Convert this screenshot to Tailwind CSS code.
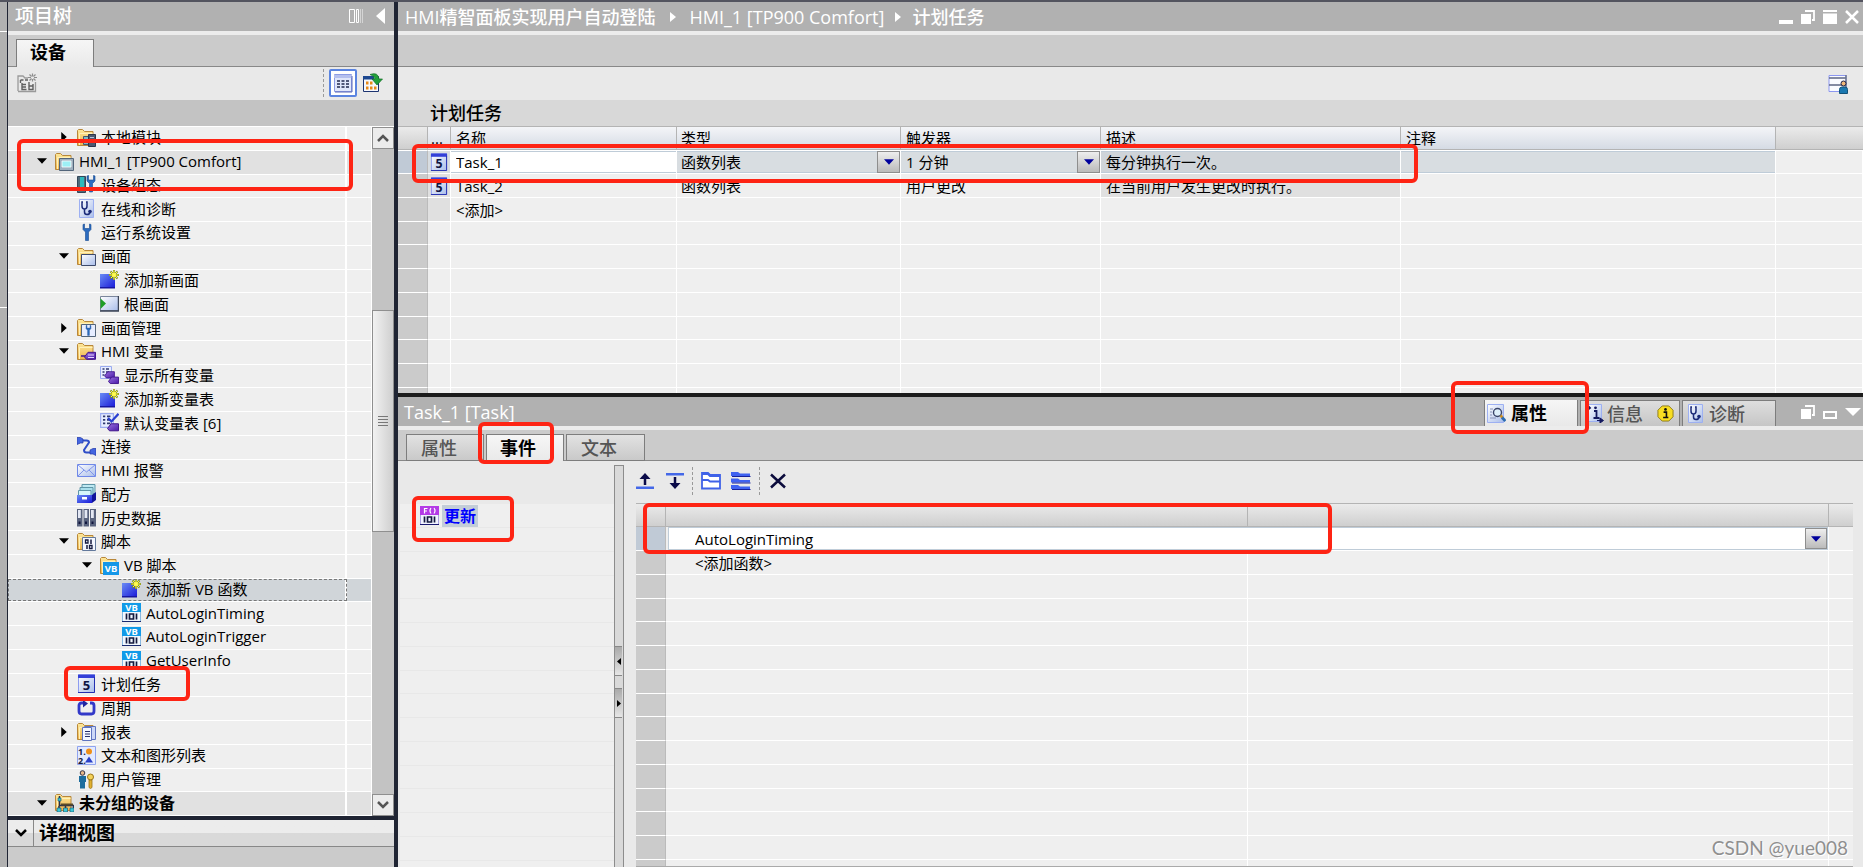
<!DOCTYPE html>
<html lang="zh-CN">
<head>
<meta charset="utf-8">
<title>计划任务</title>
<script src="https://cdn.jsdelivr.net/npm/@tailwindcss/browser@4"></script>
</head>
<body class="relative flex h-screen min-h-[600px] overflow-hidden border-t-2 border-[#53545f] bg-[#cbcbcb] font-['Open_Sans','Noto_Sans_CJK_SC',sans-serif] text-[15px] leading-5 text-black">

<!-- Gradients stay rendered so that the icons can paint with them -->
<svg class="absolute size-0" aria-hidden="true">
  <defs>
    <linearGradient id="gFolder" x1="0" y1="0" x2="0" y2="1"><stop offset="0" stop-color="#fde89a"/><stop offset="1" stop-color="#eeb44c"/></linearGradient>
    <linearGradient id="gBlue" x1="0" y1="0" x2="1" y2="1"><stop offset="0" stop-color="#6a8cf5"/><stop offset="1" stop-color="#1a1ad8"/></linearGradient>
    <linearGradient id="gPane" x1="0" y1="0" x2="1" y2="1"><stop offset="0" stop-color="#ffffff"/><stop offset="1" stop-color="#a9bdea"/></linearGradient>
    <linearGradient id="gPurple" x1="0" y1="0" x2="1" y2="1"><stop offset="0" stop-color="#9a70e0"/><stop offset="1" stop-color="#4a1ba8"/></linearGradient>
  </defs>
</svg>

<!-- Shared icon shapes -->
<svg class="hidden" aria-hidden="true">
  <symbol id="folder" viewBox="0 0 19 19"><path d="M.5 17.500V2.500l1-1h4l2 2h8.500v14z" fill="url(#gFolder)" stroke="#b8873a"/><path d="M2.500 17V5.500h13" fill="none" stroke="#fff0b8"/></symbol>
  <symbol id="wr" viewBox="0 0 10 18"><path d="M1 1v5l2.500 2.500V17h3V8.500L9 6V1L7.500.5V5h-5V.5z" fill="#2c6cc0" stroke="#154a90" stroke-width=".6"/></symbol>
  <symbol id="local" viewBox="0 0 19 19"><use href="#folder"/><path d="M6.500 8.500h5v8h-5z" fill="#7eb8c8" stroke="#46566e"/><path d="M11.500 6.500h7v12h-7z" fill="#4b5870" stroke="#2b354a"/><path d="M13 9h4v1h-4z" fill="#b8c4da"/></symbol>
  <symbol id="hmi" viewBox="0 0 19 19"><use href="#folder"/><path d="M4.500 6.500h14v12h-14z" fill="#9fb0bf" stroke="#53657a"/><path d="M7 9h9v6H7z" fill="#9df0f5" stroke="#fff" stroke-width=".8"/></symbol>
  <symbol id="devcfg" viewBox="0 0 19 19"><path d="M.5 1.500h8v16h-8z" fill="#4d6a7a" stroke="#33475a"/><path d="M3 2h4v14H3z" fill="#2fb9bd"/><use href="#wr" x="9" y="0" width="10" height="18"/></symbol>
  <symbol id="diag" viewBox="0 0 19 19"><path d="M2.500.5h14v18h-14z" fill="url(#gPane)" stroke="#9db0f2"/><path d="M6 3H5v4q0 3 2.500 3T10 7V3H9M7.500 10v3q0 2.500 2.500 2.500t3-2" fill="none" stroke="#1b2a78" stroke-width="1.500"/><circle cx="13" cy="12.500" r="1.800" fill="#1b2a78"/></symbol>
  <symbol id="wrench" viewBox="0 0 19 19"><use href="#wr" x="5" y="0" width="10" height="19"/></symbol>
  <symbol id="screens" viewBox="0 0 19 19"><use href="#folder"/><path d="M4.500 7.500h14v11h-14z" fill="url(#gPane)" stroke="#3d4a6c"/></symbol>
  <symbol id="new" viewBox="0 0 19 19"><path d="M0 4h15v14H0z" fill="url(#gBlue)"/><path d="M0 17h15v1.500H0z" fill="#1717a0"/><path d="M14 0v10M9 5h10M10.500 1.500l7 7M17.500 1.500l-7 7" stroke="#7a8a1c" stroke-width="1.800"/><path d="M14 .5v9M9.500 5h9M11 2l6 6M17 2l-6 6" stroke="#fff93c"/><circle cx="14" cy="5" r="2" fill="#fffb55"/></symbol>
  <symbol id="root" viewBox="0 0 19 19"><path d="M.5 2.500h18v14H.5z" fill="url(#gPane)" stroke="#7b869c"/><path d="M18.500 2v15H0" fill="none" stroke="#3c4558" stroke-width="1.500"/><path d="M.5 4.500L6 9.500l-5.500 5.500z" fill="#1f9e28"/></symbol>
  <symbol id="scrmgmt" viewBox="0 0 19 19"><use href="#folder"/><path d="M4.500 6.500h14v12h-14z" fill="#e6edff" stroke="#53657a"/><use href="#wr" x="7.500" y="7" width="8" height="11"/></symbol>
  <symbol id="tag" viewBox="0 0 12 9"><path d="M.5 5.500L4 .8h7.500v7H2.500z" fill="url(#gPurple)" stroke="#40158c"/></symbol>
  <symbol id="tags" viewBox="0 0 19 19"><use href="#folder"/><path d="M4 14h5" stroke="#40158c" stroke-width="1.500"/><use href="#tag" x="7" y="9" width="12" height="10"/><path d="M11 13h6M11 15.500h6" stroke="#e6d6ff"/></symbol>
  <symbol id="lst" viewBox="0 0 12 13"><path d="M.5.5h11v12H.5z" fill="#e8eeff" stroke="#9aabf0"/><path d="M2.500 3h2M2.500 6h2M2.500 9h2M6 3h3M6 6h3M6 9h3" stroke="#303a70" stroke-width="1.500"/></symbol>
  <symbol id="showtags" viewBox="0 0 19 19"><use href="#lst" width="12" height="13"/><use href="#tag" x="4" y="5" width="11" height="8"/><use href="#tag" x="8" y="10" width="11" height="9"/></symbol>
  <symbol id="deftags" viewBox="0 0 19 19"><use href="#lst" width="14" height="15"/><path d="M8 5l3.500 3.500L18.500.8" fill="none" stroke="#2a3fd0" stroke-width="2.200"/><use href="#tag" x="7" y="10" width="12" height="9"/></symbol>
  <symbol id="conn" viewBox="0 0 19 19"><path d="M5 3.500h4.500q2.500 0 2.500 2L7 13q0 2.500 2.500 2.500H14" fill="none" stroke="#2f4ec8" stroke-width="2"/><path d="M0 .5h3.500L6 2v4H3.500L0 7.500zM19 11.500h-3L13 13v4h3l3 1.500z" fill="#4466e0" stroke="#2238a8" stroke-width=".7"/></symbol>
  <symbol id="mail" viewBox="0 0 19 19"><path d="M.5 3.500h18v12H.5z" fill="url(#gPane)" stroke="#6f88e8"/><path d="M1 4l8.500 7L18 4M1 15l6-6M18 15l-6-6" fill="none" stroke="#8095ea"/></symbol>
  <symbol id="recipe" viewBox="0 0 19 19"><path d="M5 .5h13v9H5z" fill="#bfe9f2" stroke="#5f96a8"/><path d="M3 3.500h13v8H3z" fill="#a9dfec" stroke="#5f96a8"/><path d="M1.500 6.500h12.500v6H1.500z" fill="#d6f5fb" stroke="#5f96a8"/><path d="M15 11l4-3v8l-4 3z" fill="#10149a"/><path d="M0 11h15v8H0z" fill="url(#gBlue)"/><path d="M5 13h5v2.500H5z" fill="#fff"/></symbol>
  <symbol id="hist" viewBox="0 0 19 19"><path d="M0 1h5.500v17.500H0zM6.500 1H12v17.500H6.500zM13 1h6v17.500h-6z" fill="#59637e"/><path d="M1 2h2.800v8H1zM7.500 2h2.800v8H7.500zM14 2h2.800v8H14z" fill="#e4e8f4"/><path d="M1.500 13.500h2V16h-2zM8 13.500h2V16H8zM14.500 13.500h2V16h-2z" fill="#10153c"/></symbol>
  <symbol id="script" viewBox="0 0 19 19"><use href="#folder"/><path d="M5.500 5.500h13v13h-13z" fill="#f4f7ff" stroke="#63799c"/><path d="M8.500 8h2.500v3H8.500zM12.500 13.500H15v3h-2.500z" fill="none" stroke="#14193e" stroke-width="1.300"/><path d="M14 7.500V12M10 13v4" stroke="#14193e" stroke-width="1.500"/></symbol>
  <symbol id="vbfolder" viewBox="0 0 19 19"><use href="#folder"/><path d="M3 6h16v13H3z" fill="#1497e8"/><text x="11" y="16" text-anchor="middle" font-family="Noto Sans" font-weight="700" font-size="9.500" fill="#fff">VB</text></symbol>
  <symbol id="vb" viewBox="0 0 19 19"><path d="M.5.5h18v18H.5z" fill="#f2f8ff" stroke="#88b8e0"/><path d="M0 0h19v9H0z" fill="#119ae8"/><path d="M0 18h19v1H0z" fill="#1a2a70"/><text x="9.500" y="8" text-anchor="middle" font-family="Noto Sans" font-weight="700" font-size="9.500" fill="#fff">VB</text><path d="M4.500 10.500v6M14.500 10.500v6M7.500 11h4v5h-4z" fill="none" stroke="#14193e" stroke-width="1.700"/></symbol>
  <symbol id="func" viewBox="0 0 19 19"><path d="M.5.5h18v18H.5z" fill="#f2f4ff" stroke="#a9a0e0"/><path d="M0 0h19v9H0z" fill="#b43be6"/><path d="M0 18h19v1H0z" fill="#1a1a70"/><path d="M4.500 7.500v-5h3M4.500 5H7M11 2q-2 2.700 0 5.500M14 2q2 2.700 0 5.500" fill="none" stroke="#fff" stroke-width="1.200"/><path d="M4.500 10.500v6M14.500 10.500v6M7.500 11h4v5h-4z" fill="none" stroke="#14193e" stroke-width="1.700"/></symbol>
  <symbol id="task" viewBox="0 0 19 19"><path d="M1.500 1h16v17.500h-16z" fill="url(#gPane)" stroke="#8d9cf0"/><path d="M1 .5h17V4H1z" fill="#3340d8"/><path d="M17.500 3v15.500H1" fill="none" stroke="#2430b0"/><text x="9.500" y="15.500" text-anchor="middle" font-family="Noto Sans" font-weight="700" font-size="13" fill="#111644">5</text></symbol>
  <symbol id="cycle" viewBox="0 0 19 19"><path d="M6 5H4.500Q2 5 2 7.500V13q0 3 2.500 3h10q2.500 0 2.500-3V7.500Q17 5 14.500 5H13" fill="none" stroke="#3238c8" stroke-width="2.800"/><path d="M6 9.500V2l5 3.500z" fill="#2025a0"/></symbol>
  <symbol id="report" viewBox="0 0 19 19"><use href="#folder"/><path d="M7.500 4.500h11v13h-11z" fill="#cdd8f8" stroke="#5f74c0"/><path d="M5.500 5.500h9v13h-9z" fill="#f4f7ff" stroke="#5f74c0"/><path d="M8 9.500h5M8 12h5M8 14.500h5" stroke="#28306a" stroke-width="1.200"/></symbol>
  <symbol id="textlist" viewBox="0 0 19 19"><path d="M.5.5h18v18H.5z" fill="#e3eaff" stroke="#8fa3ee"/><text x="1" y="8.500" font-family="Noto Sans" font-weight="700" font-size="9" fill="#14193e">1.</text><text x="1" y="17.500" font-family="Noto Sans" font-weight="700" font-size="9" fill="#14193e">2.</text><circle cx="12" cy="5.500" r="3" fill="#f09018"/><path d="M12 10.500l4 6H8z" fill="#2a40c8"/></symbol>
  <symbol id="user" viewBox="0 0 19 19"><circle cx="5.500" cy="3" r="2.300" fill="#e8b888" stroke="#20243c" stroke-width=".9"/><path d="M2 6h7v6H8v6.500H3V12H2z" fill="#1d6d9e"/><circle cx="13.500" cy="7" r="3" fill="#f4d25a" stroke="#9a7418"/><path d="M12 10h3v7.500l-1.500 1-1.500-1z" fill="#e0b030" stroke="#9a7418" stroke-width=".8"/></symbol>
  <symbol id="ungrouped" viewBox="0 0 19 19"><use href="#folder"/><path d="M4.500 3v10M4.500 12.500h14v3M10.500 12v4M4 13v3" fill="none" stroke="#243050" stroke-width="1.500"/><path d="M6 10.500h12v2H6z" fill="#5b4a28"/><path d="M3 5h3v3H3zM2 15h4v4H2zM8.500 15h4v4h-4zM15 15h4v4h-4z" fill="#38c8d8" stroke="#245a70" stroke-width=".7"/></symbol>
  <symbol id="doc-off" viewBox="0 0 20 20"><path d="M1 18V3h5l2 2h3M1 18.500h17.500V9" fill="none" stroke="#9a9a9a" stroke-width="1.300"/><path d="M3.500 7h3M8 7h3M3.500 7v3M5 10v6.500h4.500M5 11.500h4M5 14h4M12 9v7.500h4V11M12 13h4" fill="none" stroke="#5f5f5f" stroke-width="1.400"/><path d="M15.500.5v3M15.500 6v2.500M11 4.500h3M17 4.500h3M12.500 1.500l2 2M18.500 1.500l-2 2M12.500 7.500l2-2M18.500 7.500l-2-2" stroke="#8d8d8d" stroke-width="1.200"/></symbol>
  <symbol id="listview" viewBox="0 0 20 20"><path d="M1.500 1.500h17v17h-17z" fill="#e0e6fa" stroke="#8d9ce4"/><path d="M1 2h18v3H1z" fill="#b5c0ee"/><path d="M19 3v16H2" fill="none" stroke="#5a68b8"/><path d="M4 8h3M8.500 8h3M13 8h3M4 11h3M8.500 11h3M13 11h3M4 14h3M8.500 14h3M13 14h3" stroke="#20284e" stroke-width="1.300"/></symbol>
  <symbol id="netview" viewBox="0 0 20 20"><path d="M.5 3.500h15v15H.5z" fill="#f6f7fb" stroke="#1d3470"/><path d="M0 3h11v3.500H0z" fill="#1d4890"/><path d="M3 8.500h2.500v3H3zM7 8.500h2.500v3H7zM3 13.500h2.500v3H3zM7 13.500h2.500v3H7zM11 13.500h2.500v3H11z" fill="#e88a18"/><path d="M7 1.500q8-3 9 4.500h3.500L14 12 9 6h3q-.5-3-5-4.500z" fill="#23a03a" stroke="#127026" stroke-width=".7"/></symbol>
  <symbol id="layout-user" viewBox="0 0 20 20"><path d="M1 1.500h17v16H1z" fill="#fafbff" stroke="#8c97f0"/><path d="M1 4h17M1 11h17" stroke="#5d6784" stroke-width="1.500"/><path d="M18 1v17" stroke="#6d7690" stroke-width="1.500"/><circle cx="15.500" cy="9.500" r="2.500" fill="#f0b878" stroke="#1e234a"/><path d="M11.500 19.500v-4q0-2.500 2.500-2.500h3q2.500 0 2.500 2.500v4z" fill="#1a78b0" stroke="#135278"/></symbol>
  <symbol id="props" viewBox="0 0 19 19"><path d="M.5.5h16v18H.5z" fill="url(#gPane)" stroke="#9db0f2"/><path d="M3 5h3M3 8h2M3 11h2M3 14h6" stroke="#8793b8"/><circle cx="10.500" cy="8.500" r="4" fill="#dff0fa" stroke="#3a4468" stroke-width="1.400"/><path d="M13.500 11.500l2 2" stroke="#d09020" stroke-width="2.500"/><path d="M15 13.500l3.500 3.500" stroke="#2c6cb0" stroke-width="3"/></symbol>
  <symbol id="infopage" viewBox="0 0 19 19"><path d="M3.500.5h13v17h-13z" fill="url(#gPane)" stroke="#9db0f2"/><path d="M0 3.500h4M2.500 1.500L5 4 2.500 6M9 7h2.500v7M8.500 14h6" fill="none" stroke="#14195e" stroke-width="1.800"/><circle cx="10.500" cy="3.800" r="1.400" fill="#14195e"/><path d="M12 16.500h4.500M15 14l3.500 2.500L15 19z" fill="#14195e" stroke="#14195e"/></symbol>
  <symbol id="infobadge" viewBox="0 0 18 18"><path d="M5.500 1h7L17 5.500v7L12.500 17h-7L1 12.500v-7z" fill="#f8de22" stroke="#8c7a18"/><path d="M7 7.500h3V13M6.500 13.200h5.500" fill="none" stroke="#111" stroke-width="1.700"/><circle cx="9" cy="4.700" r="1.400" fill="#111"/></symbol>
  <symbol id="restore" viewBox="0 0 14 14"><path d="M0 4h10v10H0z" fill="#fff"/><path d="M4 1h9v9h-2" fill="none" stroke="#fff" stroke-width="1.800"/></symbol>
</svg>

<!-- Edge of the collapsed portal bar -->
<div class="flex w-2 shrink-0 flex-col border-r border-[#1f2433] bg-[#b1b1b1]"><div class="h-[30px] border-b border-white"></div><div class="h-[276px] border-b border-white"></div></div>

<!-- Project tree -->
<aside class="flex w-[386px] shrink-0 flex-col">
  <header class="flex h-[29px] shrink-0 items-center bg-[#b1b1b1] pr-[9px] pb-px pl-[7px]">
    <h2 class="text-[19px] font-medium text-white">项目树</h2>
    <button class="ml-auto" aria-label="列"><svg class="h-4 w-4" viewBox="0 0 16 16"><path d="M1.500 1.500h5v13h-5zM8.500 1.500h2v13h-2z" fill="none" stroke="#fff"/><path d="M12.500 1v14M14.500 1v14" stroke="#d4d4d4"/></svg></button>
    <button class="ml-3" aria-label="折叠"><svg class="h-4 w-[9px]" viewBox="0 0 9 16"><path d="M9 0v16L0 8z" fill="#fff"/></svg></button>
  </header>
  <div class="flex h-9 shrink-0 items-end border-t-4 border-[#ececec] bg-[#cbcbcb] shadow-[inset_0_-1px_0_#888]">
    <button class="ml-2 h-7 w-[78px] border-x border-t border-[#7d7d7d] bg-linear-to-b from-[#f6f6f6] to-[#e9e9e9] pb-1 pl-[13px] text-left text-[18px] font-bold">设备</button>
  </div>
  <div class="flex h-[33px] shrink-0 items-center bg-[#e9e9e9] pr-[11px] pb-[2px] pl-[9px]">
    <button aria-label="新建"><svg class="size-5"><use href="#doc-off"/></svg></button>
    <div class="ml-auto h-7 border-l border-dashed border-[#999]"></div>
    <button class="ml-[5px] flex size-7 items-center justify-center rounded-xs border-2 border-[#5b84e0] bg-white" aria-label="列表视图"><svg class="size-5"><use href="#listview"/></svg></button>
    <button class="ml-[6px]" aria-label="网络视图"><svg class="size-5"><use href="#netview"/></svg></button>
  </div>
  <div class="h-[27px] shrink-0 border-b border-white bg-[#c3c3c3]"></div>
  <div class="flex min-h-0 flex-1">
    <ul id="tree" role="tree" class="flex min-w-0 flex-1 flex-col bg-[#efefef]"></ul>
    <div class="flex w-[23px] flex-col border-l border-white bg-[#c3c3c3]">
      <button class="flex h-[22px] w-full shrink-0 items-center justify-center border border-[#8f8f8f] bg-[#ececec]" aria-label="向上滚动"><svg class="h-2 w-3" viewBox="0 0 12 8"><path d="M1 7l5-5 5 5" fill="none" stroke="#555" stroke-width="2.500"/></svg></button>
      <div class="flex-[161]"></div>
      <div class="flex flex-[221] items-center justify-center border border-[#8f8f8f] bg-linear-to-r from-[#f2f2f2] to-[#cfcfcf]"><svg class="h-3 w-[10px]" viewBox="0 0 10 12"><path d="M0 1.500h10M0 4.500h10M0 7.500h10M0 10.500h10" stroke="#777"/></svg></div>
      <div class="flex-[263]"></div>
      <button class="flex h-[22px] w-full shrink-0 items-center justify-center border border-[#8f8f8f] bg-[#ececec]" aria-label="向下滚动"><svg class="h-2 w-3" viewBox="0 0 12 8"><path d="M1 1l5 5 5-5" fill="none" stroke="#555" stroke-width="2.500"/></svg></button>
    </div>
  </div>
  <button class="flex h-[31px] shrink-0 items-center border-t-4 border-b border-t-[#1f2433] border-b-[#888] bg-linear-to-b from-[#ececec] from-50% to-[#d9d9d9] to-50%">
    <span class="flex h-full w-[26px] items-center justify-center border-r border-[#888]"><svg class="h-2 w-3" viewBox="0 0 12 8"><path d="M1 1l5 5 5-5" fill="none" stroke="#000" stroke-width="2.500"/></svg></span>
    <span class="pl-[5px] text-[19px] font-bold">详细视图</span>
  </button>
  <div class="h-5 shrink-0"></div>
</aside>

<div class="w-1 shrink-0 bg-[#1f2433]"></div>

<main class="flex min-w-0 flex-1 flex-col">
  <!-- Scheduled tasks editor -->
  <section class="flex min-h-0 flex-[391] basis-0 flex-col overflow-hidden">
    <header class="flex h-[29px] shrink-0 items-center bg-[#b1b1b1] pr-1 pl-[7px] text-white">
      <nav class="flex items-center text-[18px] font-medium">
        <a href="#">HMI精智面板实现用户自动登陆</a>
        <svg class="mx-[14px] h-[10px] w-[6px]" viewBox="0 0 6 10"><path d="M0 0l6 5-6 5z" fill="#fff"/></svg>
        <a href="#">HMI_1 [TP900 Comfort]</a>
        <svg class="mx-[11px] h-[10px] w-[6px]" viewBox="0 0 6 10"><path d="M0 0l6 5-6 5z" fill="#fff"/></svg>
        <a href="#">计划任务</a>
      </nav>
      <div class="ml-auto flex items-center gap-2">
        <button aria-label="最小化"><svg class="size-[14px]" viewBox="0 0 14 14"><path d="M0 10h14v4H0z" fill="#fff"/></svg></button>
        <button aria-label="浮动"><svg class="size-[14px]"><use href="#restore"/></svg></button>
        <button aria-label="最大化"><svg class="size-[14px]" viewBox="0 0 14 14"><path d="M0 0h14v2H0zM0 3.500h14V14H0z" fill="#fff"/></svg></button>
        <button aria-label="关闭"><svg class="size-[14px]" viewBox="0 0 14 14"><path d="M1 1l12 12M13 1L1 13" stroke="#fff" stroke-width="2.500"/></svg></button>
      </div>
    </header>
    <div class="h-9 shrink-0 border-t-4 border-b border-t-[#ececec] border-b-[#888] bg-[#cbcbcb]"></div>
    <div class="flex h-[33px] shrink-0 items-center justify-end bg-[#e9e9e9] pr-[15px]"><button aria-label="用户布局"><svg class="size-5"><use href="#layout-user"/></svg></button></div>
    <h1 class="h-[26px] shrink-0 bg-[#d8d8d8] pl-8 text-[18px] leading-[26px] font-medium">计划任务</h1>
    <div class="min-h-0 flex-1 overflow-hidden bg-[#efefef]">
      <table class="w-full table-fixed border-separate border-spacing-0 [&_td]:p-0 [&_th]:p-0">
        <colgroup><col class="w-[30px]"><col class="w-[23px]"><col class="w-[226px]"><col class="w-[224px]"><col class="w-[200px]"><col class="w-[300px]"><col class="w-[375px]"><col></colgroup>
        <thead>
          <tr class="h-6 text-left [&>th]:border-t [&>th]:border-r [&>th]:border-b [&>th]:border-[#b4b4b4] [&>th]:bg-linear-to-b [&>th]:from-[#f4f5f8] [&>th]:to-[#d5dbe4] [&>th]:font-normal [&>th:first-child]:from-[#ebebeb] [&>th:first-child]:to-[#cfcfcf] [&>th:last-child]:border-r-0 [&>th:last-child]:from-[#ebebeb] [&>th:last-child]:to-[#cfcfcf]">
            <th></th><th><div class="pl-[3px]">...</div></th><th><div class="pl-[5px]">名称</div></th><th><div class="pl-1">类型</div></th><th><div class="pl-[5px]">触发器</div></th><th><div class="pl-[5px]">描述</div></th><th><div class="pl-[5px]">注释</div></th><th></th>
          </tr>
        </thead>
        <tbody id="tasks" class="[&>tr]:h-6 [&>tr:nth-child(4n)]:h-[23px] [&_td]:border-r [&_td]:border-b [&_td]:border-white [&_td:first-child]:border-r-[#bbb] [&_td:first-child]:bg-[#cbcbcb]">
          <tr class="[&>td]:border-t [&>td]:border-b [&>td]:border-t-white">
            <td class="bg-[#c0cad6]!"></td>
            <td class="bg-[#d8dde1]"><svg class="ml-[2px] size-[18px]"><use href="#task"/></svg></td>
            <td class="bg-white"><input class="block h-[22px] w-full border-y border-[#bfccd8] bg-white pl-[5px] outline-none" value="Task_1" aria-label="名称"></td>
            <td class="bg-[#d8dde1]"><div class="relative"><select class="block h-[22px] w-full appearance-none border-y border-[#bfccd8] pl-1" aria-label="类型"><option>函数列表</option></select><span class="pointer-events-none absolute top-0 right-0 flex h-[22px] w-[23px] items-center justify-center border border-[#8e8e8e] bg-linear-to-b from-[#eee] to-[#bbb]"><svg class="h-[6px] w-[10px]" viewBox="0 0 11 6"><path d="M0 0h11L5.500 6z" fill="#00009c"/></svg></span></div></td>
            <td class="bg-[#d8dde1]"><div class="relative"><select class="block h-[22px] w-full appearance-none border-y border-[#bfccd8] pl-[5px]" aria-label="触发器"><option>1 分钟</option></select><span class="pointer-events-none absolute top-0 right-0 flex h-[22px] w-[23px] items-center justify-center border border-[#8e8e8e] bg-linear-to-b from-[#eee] to-[#bbb]"><svg class="h-[6px] w-[10px]" viewBox="0 0 11 6"><path d="M0 0h11L5.500 6z" fill="#00009c"/></svg></span></div></td>
            <td class="bg-[#cfd4d9]"><div class="h-[22px] border-y border-[#bfccd8] pl-[5px] leading-5">每分钟执行一次。</div></td>
            <td class="bg-[#d8dde1]"><div class="h-[22px] border-y border-[#bfccd8]"></div></td>
            <td></td>
          </tr>
          <tr>
            <td></td>
            <td class="bg-[#e0e0e0]"><svg class="ml-[2px] size-[18px]"><use href="#task"/></svg></td>
            <td><div class="pl-[5px]">Task_2</div></td><td><div class="pl-1">函数列表</div></td><td><div class="pl-[5px]">用户更改</div></td><td class="bg-[#e0e0e0]"><div class="pl-[5px]">在当前用户发生更改时执行。</div></td><td></td><td></td>
          </tr>
          <tr><td></td><td class="bg-[#e0e0e0]"></td><td><div class="pl-[5px]">&lt;添加&gt;</div></td><td></td><td></td><td></td><td></td><td></td></tr>
        </tbody>
      </table>
    </div>
  </section>

  <!-- Inspector window -->
  <section class="flex min-h-0 flex-[474] basis-0 flex-col bg-[#e9e9e9]">
    <div class="h-1 shrink-0 bg-[#1c1c1c]"></div>
    <header class="flex h-[29px] shrink-0 items-end bg-[#b1b1b1] pr-[2px] pl-[6px]">
      <h2 class="self-center text-[18px] font-medium text-white">Task_1 [Task]</h2>
      <div class="ml-auto flex items-end gap-[2px] text-[18px] text-[#555]">
        <button class="flex h-[26px] w-[94px] items-center border-x border-[#7d7d7d] bg-linear-to-b from-[#f6f6f6] to-[#e9e9e9] pl-[2px] font-bold text-black"><svg class="mr-[5px] size-[19px]"><use href="#props"/></svg>属性</button>
        <button class="flex h-[26px] w-[100px] items-center border-x border-t border-[#7d7d7d] bg-linear-to-b from-[#dedede] to-[#c6c6c6] pl-1 font-medium"><svg class="mr-[3px] size-[19px]"><use href="#infopage"/></svg>信息<svg class="ml-[14px] size-[17px]"><use href="#infobadge"/></svg></button>
        <button class="flex h-[26px] w-[94px] items-center border-x border-t border-[#7d7d7d] bg-linear-to-b from-[#dedede] to-[#c6c6c6] pl-[3px] font-medium"><svg class="mr-1 size-[19px]"><use href="#diag"/></svg>诊断</button>
      </div>
      <div class="ml-[25px] flex items-center gap-2 self-center">
        <button aria-label="浮动"><svg class="size-[14px]"><use href="#restore"/></svg></button>
        <button aria-label="折叠"><svg class="size-[14px]" viewBox="0 0 14 14"><path d="M1 7h12v6H1z" fill="none" stroke="#fff" stroke-width="2"/></svg></button>
        <button aria-label="展开"><svg class="h-2 w-4" viewBox="0 0 16 8"><path d="M0 0h16L8 8z" fill="#fff"/></svg></button>
      </div>
    </header>
    <div class="flex h-[35px] shrink-0 items-end gap-[2px] border-t-4 border-[#ececec] bg-[#cbcbcb] pl-2 text-[18px] text-[#555] shadow-[inset_0_-1px_0_#888]">
      <button class="h-[27px] w-[78px] border border-[#7d7d7d] bg-linear-to-b from-[#e2e2e2] to-[#c9c9c9] pl-[14px] text-left font-medium">属性</button>
      <button class="h-[27px] w-[78px] border-x border-t border-[#7d7d7d] bg-linear-to-b from-[#f6f6f6] to-[#e9e9e9] pl-[13px] text-left font-bold text-black">事件</button>
      <button class="h-[27px] w-[79px] border border-[#7d7d7d] bg-linear-to-b from-[#e2e2e2] to-[#c9c9c9] pl-[14px] text-left font-medium">文本</button>
    </div>
    <div class="flex min-h-0 flex-1">
      <div class="w-[216px] shrink-0 overflow-hidden pt-[42px] pl-[2px]">
        <ul id="events" class="border-t border-[#e9e9e9] bg-[#efefef] [&>li]:h-6 [&>li]:border-b [&>li]:border-[#e8e8e8] [&>li:nth-child(4n)]:h-[23px]">
          <li class="flex items-center pl-5"><svg class="size-[19px]"><use href="#func"/></svg><button class="ml-[3px] h-[22px] bg-[#c3cdd8] px-[2px] text-[16px] leading-[22px] font-bold text-[#0000ff]">更新</button></li>
        </ul>
      </div>
      <div class="mt-1 flex w-[10px] shrink-0 flex-col border-x border-t border-[#8c8c8c] bg-[#d9d9d9]">
        <div class="flex-[180]"></div>
        <button class="flex h-[30px] w-[7px] shrink-0 items-center justify-center border-y border-[#888] bg-linear-to-b from-[#aaa] to-[#e6e6e6]" aria-label="向左折叠"><svg class="h-[7px] w-1" viewBox="0 0 4 7"><path d="M4 0v7L0 3.500z"/></svg></button>
        <div class="h-3"></div>
        <button class="flex h-[30px] w-[7px] shrink-0 items-center justify-center border-y border-[#888] bg-linear-to-b from-[#aaa] to-[#e6e6e6]" aria-label="向右折叠"><svg class="h-[7px] w-1" viewBox="0 0 4 7"><path d="M0 0v7l4-3.500z"/></svg></button>
        <div class="flex-[149]"></div>
      </div>
      <div class="flex min-w-0 flex-1 flex-col pr-[10px] pl-3">
        <div class="flex h-[42px] shrink-0 items-center pb-[2px]">
          <button aria-label="上移"><svg class="size-[18px]" viewBox="0 0 18 18"><path d="M0 14.500h18V17H0z" fill="#4468e8"/><path d="M9 13V5" stroke="#0a0a48" stroke-width="2.500"/><path d="M3.500 7L9 1l5.500 6z" fill="#0a0a48"/></svg></button>
          <button class="ml-3" aria-label="下移"><svg class="size-[18px]" viewBox="0 0 18 18"><path d="M0 1h18v2.500H0z" fill="#4468e8"/><path d="M9 5v8" stroke="#0a0a48" stroke-width="2.500"/><path d="M3.500 11L9 17l5.500-6z" fill="#0a0a48"/></svg></button>
          <div class="mx-2 h-7 border-l border-dashed border-[#999]"></div>
          <button aria-label="折叠全部"><svg class="size-5" viewBox="0 0 20 20"><path d="M1 17.500V2h6l2 2h10v13.500z" fill="#fff" stroke="#3f62e8" stroke-width="1.800"/><path d="M1 3h6l2 2h10M1 9h6l2 1.500h10" fill="none" stroke="#3f62e8" stroke-width="2"/></svg></button>
          <button class="ml-[10px]" aria-label="展开全部"><svg class="size-5" viewBox="0 0 20 20"><path d="M0 1h7l2 1.500h10V5H0zM0 7.500h7l2 1.500h10v2.500H0zM0 14h7l2 1.500h10V18H0z" fill="#3f62f0"/><path d="M1 5.500h18.500M1 12h18.500M1 18.500h18.500" stroke="#16209a" stroke-width="1.200"/></svg></button>
          <div class="mr-[10px] ml-2 h-7 border-l border-dashed border-[#999]"></div>
          <button aria-label="删除"><svg class="size-4" viewBox="0 0 16 16"><path d="M1 1.500l14 13M15 1.500L1 14.500" stroke="#0b0b3c" stroke-width="2.500"/></svg></button>
        </div>
        <div class="min-h-0 flex-1 overflow-hidden bg-[#efefef]">
          <table class="w-full table-fixed border-separate border-spacing-0 [&_td]:p-0 [&_th]:p-0">
            <colgroup><col class="w-[30px]"><col><col><col class="w-6"></colgroup>
            <thead><tr class="h-6 [&>th]:border-t [&>th]:border-r [&>th]:border-b [&>th]:border-[#b4b4b4] [&>th]:bg-linear-to-b [&>th]:from-[#ebebeb] [&>th]:to-[#cfcfcf] [&>th:last-child]:border-r-0"><th></th><th></th><th></th><th></th></tr></thead>
            <tbody id="functions" class="[&>tr]:h-6 [&>tr:nth-child(4n)]:h-[23px] [&_td]:border-r [&_td]:border-b [&_td]:border-white [&_td:first-child]:border-r-[#bbb] [&_td:first-child]:bg-[#cbcbcb] [&_td:last-child]:border-r-0">
              <tr>
                <td class="bg-[#c0cad6]!"></td>
                <td colspan="2"><div class="relative pl-[2px]"><select class="block h-[23px] w-full appearance-none border border-[#bfccd8] bg-white pl-[26px]" aria-label="函数"><option>AutoLoginTiming</option></select><span class="pointer-events-none absolute top-px right-px flex h-[21px] w-[22px] items-center justify-center border border-[#8e8e8e] bg-linear-to-b from-[#eee] to-[#bbb]"><svg class="h-[6px] w-[10px]" viewBox="0 0 11 6"><path d="M0 0h11L5.500 6z" fill="#00009c"/></svg></span></div></td>
                <td></td>
              </tr>
              <tr><td></td><td><div class="pl-[29px]">&lt;添加函数&gt;</div></td><td></td><td></td></tr>
            </tbody>
          </table>
        </div>
        <div class="h-px shrink-0 bg-[#aaa]"></div>
      </div>
    </div>
  </section>
</main>

<!-- Highlight frames -->
<div class="pointer-events-none absolute top-[137px] left-[17px] h-[52px] w-[336px] rounded-md border-4 border-[#fe2414]"></div>
<div class="pointer-events-none absolute top-[664px] left-[64px] h-[35px] w-[126px] rounded-md border-4 border-[#fe2414]"></div>
<div class="pointer-events-none absolute top-[142px] left-[412px] h-[39px] w-[1006px] rounded-md border-4 border-[#fe2414]"></div>
<div class="pointer-events-none absolute top-[420px] left-[478px] h-[42px] w-[76px] rounded-md border-4 border-[#fe2414]"></div>
<div class="pointer-events-none absolute top-[494px] left-[412px] h-[46px] w-[102px] rounded-md border-4 border-[#fe2414]"></div>
<div class="pointer-events-none absolute top-[379px] left-[1451px] h-[53px] w-[138px] rounded-md border-4 border-[#fe2414]"></div>
<div class="pointer-events-none absolute top-[501px] left-[643px] h-[51px] w-[689px] rounded-md border-4 border-[#fe2414]"></div>

<div class="pointer-events-none absolute right-[15px] bottom-[9px] font-[Lato] text-[19px] text-[#8f8f8f] [text-shadow:1px_1px_0_#fff]">CSDN @yue008</div>

<script>
  // level, icon, label, expander state, row style
  const nodes = [
    [1, 'local', '本地模块', 'closed'],
    [0, 'hmi', 'HMI_1 [TP900 Comfort]', 'open', 'shade'],
    [1, 'devcfg', '设备组态'],
    [1, 'diag', '在线和诊断'],
    [1, 'wrench', '运行系统设置'],
    [1, 'screens', '画面', 'open'],
    [2, 'new', '添加新画面'],
    [2, 'root', '根画面'],
    [1, 'scrmgmt', '画面管理', 'closed'],
    [1, 'tags', 'HMI 变量', 'open'],
    [2, 'showtags', '显示所有变量'],
    [2, 'new', '添加新变量表'],
    [2, 'deftags', '默认变量表 [6]'],
    [1, 'conn', '连接'],
    [1, 'mail', 'HMI 报警'],
    [1, 'recipe', '配方'],
    [1, 'hist', '历史数据'],
    [1, 'script', '脚本', 'open'],
    [2, 'vbfolder', 'VB 脚本', 'open'],
    [3, 'new', '添加新 VB 函数', '', 'selected'],
    [3, 'vb', 'AutoLoginTiming'],
    [3, 'vb', 'AutoLoginTrigger'],
    [3, 'vb', 'GetUserInfo'],
    [1, 'task', '计划任务'],
    [1, 'cycle', '周期'],
    [1, 'report', '报表', 'closed'],
    [1, 'textlist', '文本和图形列表'],
    [1, 'user', '用户管理'],
    [0, 'ungrouped', '未分组的设备', 'open', 'bold'],
  ];
  const indent = [24, 46, 69, 91];
  const arrows = {
    open: '<button class="block" aria-label="折叠"><svg class="h-[6px] w-[10px]" viewBox="0 0 11 6"><path d="M0 0h11L5.500 6z"/></svg></button>',
    closed: '<button class="block" aria-label="展开"><svg class="h-[10px] w-[6px]" viewBox="0 0 6 11"><path d="M0 0v11l6-5.500z"/></svg></button>',
  };
  const styles = {
    shade: 'bg-[#e1e1e1]',
    bold: 'bg-[#e1e1e1] text-[16px] font-bold',
    selected: 'bg-[#d0d5d9] outline-1 -outline-offset-1 outline-dashed outline-[#777]',
  };
  document.getElementById('tree').innerHTML = nodes.map(([level, icon, label, state, style]) => `
    <li role="treeitem" class="flex min-h-0 flex-1 border-b border-white">
      <div class="flex min-w-0 flex-1 items-center border-r-2 border-white pb-[2px] ${styles[style] || ''}" style="padding-left:${indent[level]}px">
        <span class="flex w-5 shrink-0 items-center justify-center">${arrows[state] || ''}</span>
        <svg class="ml-[3px] size-[19px] shrink-0"><use href="#${icon}"/></svg>
        <span class="ml-[5px] whitespace-nowrap">${label}</span>
      </div>
      <div class="w-6 ${style === 'selected' ? 'bg-[#d0d5d9]' : style ? 'bg-[#e1e1e1]' : ''}"></div>
    </li>`).join('');

  // Blank grid rows below the filled ones
  document.getElementById('tasks').insertAdjacentHTML('beforeend',
    ('<tr>' + '<td></td>'.repeat(8) + '</tr>').repeat(8));
  document.getElementById('functions').insertAdjacentHTML('beforeend',
    ('<tr>' + '<td></td>'.repeat(4) + '</tr>').repeat(13));
  document.getElementById('events').insertAdjacentHTML('beforeend', '<li></li>'.repeat(15));
</script>
</body>
</html>
